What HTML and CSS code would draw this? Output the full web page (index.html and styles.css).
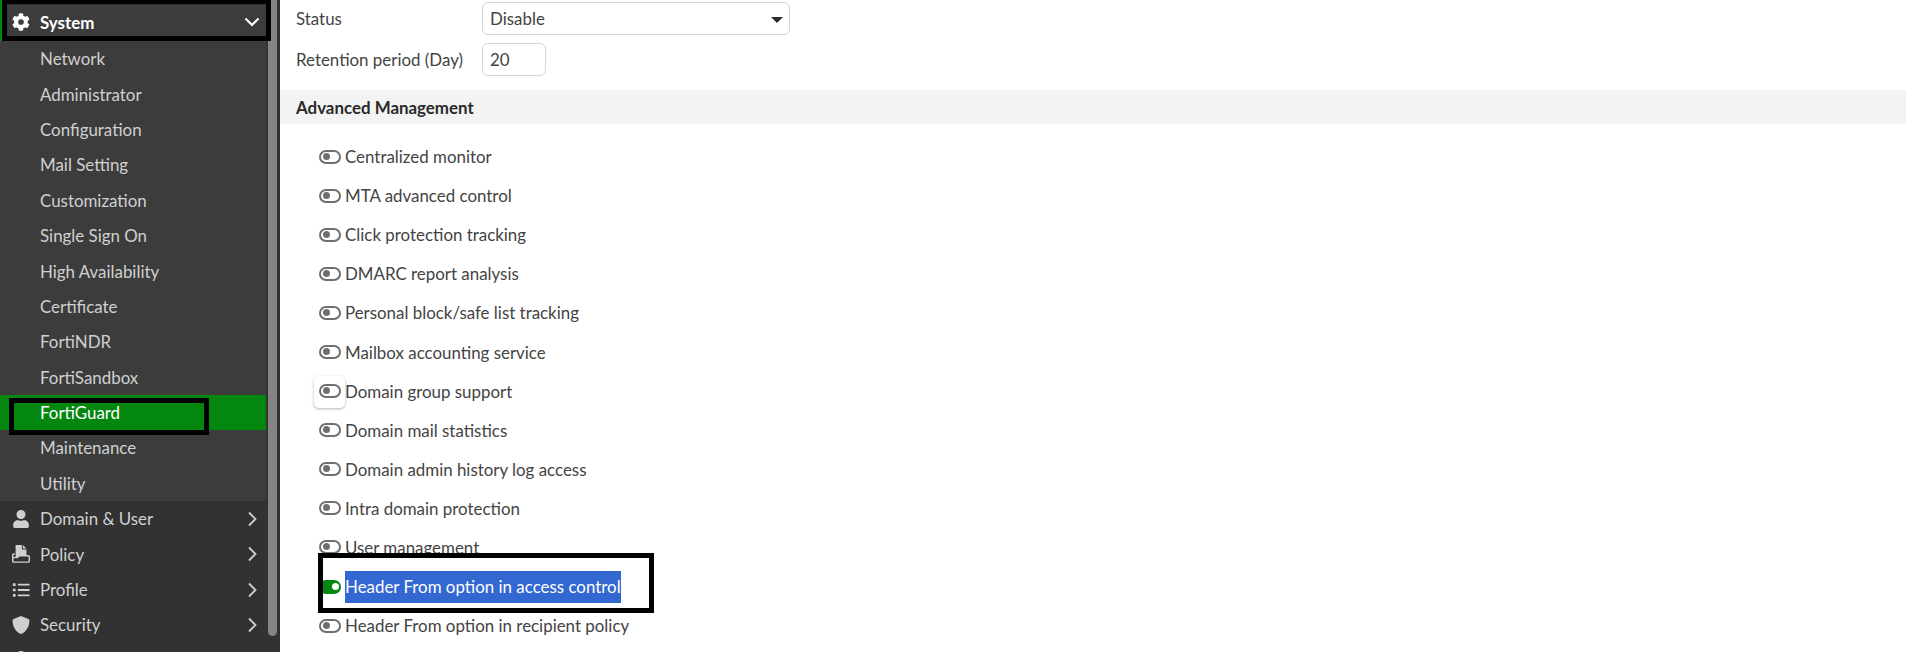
FILE: index.html
```html
<!DOCTYPE html>
<html lang="en">
<head>
  <meta charset="UTF-8">
  <title>FortiMail - FortiGuard</title>
  <link rel="stylesheet" href="styles.css">
</head>
<body>
  <div class="sidebar">
    <div class="menu">
      <div class="menu-item open">
        <svg class="icon" viewBox="0 0 512 512"><path fill-rule="evenodd" d="M487 316l-43-25a194 194 0 0 0 0-70l43-25c5-3 7-9 5-14-11-36-30-68-55-95-4-4-10-5-15-2l-43 25a190 190 0 0 0-61-35V25c0-6-4-10-9-11a201 201 0 0 0-111 0c-5 1-9 5-9 11v50a196 196 0 0 0-61 35L85 85c-5-3-11-2-15 2-25 27-44 59-55 95-2 5 0 11 5 14l43 25a194 194 0 0 0 0 70l-43 25c-5 3-7 9-5 14 11 36 30 68 55 95 4 4 10 5 15 2l43-25a190 190 0 0 0 61 35v50c0 6 4 10 9 11 38 9 75 8 111 0 5-1 9-5 9-11v-50a196 196 0 0 0 61-35l43 25c5 3 11 2 15-2 25-27 44-59 55-95 2-5 0-11-5-14zM256 336a80 80 0 1 1 0-160 80 80 0 0 1 0 160z"/></svg>
        <span>System</span>
        <svg class="chevron" viewBox="0 0 16 16"><path d="M1.500 4.500L8 11l6.500-6.500"/></svg>
      </div>
      <div class="submenu">
        <a class="sub-item">Network</a>
        <a class="sub-item">Administrator</a>
        <a class="sub-item">Configuration</a>
        <a class="sub-item">Mail Setting</a>
        <a class="sub-item">Customization</a>
        <a class="sub-item">Single Sign On</a>
        <a class="sub-item">High Availability</a>
        <a class="sub-item">Certificate</a>
        <a class="sub-item">FortiNDR</a>
        <a class="sub-item">FortiSandbox</a>
        <a class="sub-item active">FortiGuard</a>
        <a class="sub-item">Maintenance</a>
        <a class="sub-item">Utility</a>
      </div>
      <div class="menu-item">
        <svg class="icon" viewBox="0 0 448 512"><path d="M224 256a128 128 0 1 0 0-256 128 128 0 0 0 0 256zm90 32h-17a174 174 0 0 1-146 0h-17C60 288 0 348 0 422v42c0 27 21 48 48 48h352c27 0 48-21 48-48v-42c0-74-60-134-134-134z"/></svg>
        <span>Domain &amp; User</span>
        <svg class="chevron" viewBox="0 0 16 16"><path d="M5 1.500L11.500 8 5 14.500"/></svg>
      </div>
      <div class="menu-item">
        <svg class="icon" viewBox="0 0 20 20"><path d="M4 0h7v5h5v7H8l-2 2H4zM12 0l4 4h-4z"/><path class="icon-line" d="M3 10H1.800a1 1 0 0 0-1 1v7a1 1 0 0 0 1 1h16.400a1 1 0 0 0 1-1v-5a1 1 0 0 0-1-1H8l-2 2H1"/></svg>
        <span>Policy</span>
        <svg class="chevron" viewBox="0 0 16 16"><path d="M5 1.500L11.500 8 5 14.500"/></svg>
      </div>
      <div class="menu-item">
        <svg class="icon" viewBox="0 0 20 20"><path d="M1 2.500h3v3H1zM1 8.500h3v3H1zM1 14.500h3v3H1zM6.500 3h13v2h-13zM6.500 9h13v2h-13zM6.500 15h13v2h-13z"/></svg>
        <span>Profile</span>
        <svg class="chevron" viewBox="0 0 16 16"><path d="M5 1.500L11.500 8 5 14.500"/></svg>
      </div>
      <div class="menu-item">
        <svg class="icon" viewBox="0 0 512 512"><path d="M466 84L274 4a48 48 0 0 0-37 0L45 84c-18 7-29 25-29 44 0 198 114 335 221 380 12 5 25 5 37 0 85-36 221-159 221-380 0-19-12-37-29-44z"/></svg>
        <span>Security</span>
        <svg class="chevron" viewBox="0 0 16 16"><path d="M5 1.500L11.500 8 5 14.500"/></svg>
      </div>
      <div class="menu-item">
        <svg class="icon" viewBox="0 0 20 20"><path d="M4 9V6a6 6 0 0 1 12 0v3h1v10H3V9zm3 0h6V6a3 3 0 0 0-6 0z"/></svg>
      </div>
    </div>
    <div class="scrollbar"></div>
  </div>

  <div class="content">
    <div class="form-row first">
      <label>Status</label>
      <div class="select">Disable<span class="caret"></span></div>
    </div>
    <div class="form-row">
      <label>Retention period (Day)</label>
      <div class="input">20</div>
    </div>

    <div class="section-title">Advanced Management</div>

    <div class="options">
      <div class="option"><span class="toggle"></span>Centralized monitor</div>
      <div class="option"><span class="toggle"></span>MTA advanced control</div>
      <div class="option"><span class="toggle"></span>Click protection tracking</div>
      <div class="option"><span class="toggle"></span>DMARC report analysis</div>
      <div class="option"><span class="toggle"></span>Personal block/safe list tracking</div>
      <div class="option"><span class="toggle"></span>Mailbox accounting service</div>
      <div class="option focused"><span class="toggle"></span>Domain group support</div>
      <div class="option"><span class="toggle"></span>Domain mail statistics</div>
      <div class="option"><span class="toggle"></span>Domain admin history log access</div>
      <div class="option"><span class="toggle"></span>Intra domain protection</div>
      <div class="option"><span class="toggle"></span>User management</div>
      <div class="option marked"><span class="toggle on"></span><span class="selected">Header From option in access control</span></div>
      <div class="option"><span class="toggle"></span>Header From option in recipient policy</div>
    </div>
  </div>
</body>
</html>
```

FILE: styles.css
```css
*, *::before, *::after {
  margin: 0;
  padding: 0;
  box-sizing: border-box;
}
body {
  font-family: Lato, "Open Sans", sans-serif;
  font-size: 16.9px;
  color: #444;
  background: #fff;
  display: flex;
  height: 652px;
  overflow: hidden;
}
.sidebar {
  width: 280px;
  flex: none;
  display: flex;
  background: #323232;
  color: #d0d0d0;
  overflow: hidden;
}
.menu {
  width: 266px;
  margin-right: 2px;
  flex: none;
  padding-top: 5px;
}
.menu-item {
  height: 35.4px;
  flex: none;
  display: flex;
  align-items: center;
  padding: 0 6px 0 12px;
  position: relative;
}
.menu-item span {
  flex: 1;
  margin-left: 10px;
}
.menu-item.open {
  height: 36px;
  padding-bottom: 2px;
  background: #3c3c3c;
  color: #fff;
  font-weight: 700;
}
.menu-item.open::before {
  content: "";
  position: absolute;
  left: 0;
  top: -5px;
  bottom: 0;
  width: 2px;
  background: #04870f;
}
.menu-item.open::after {
  content: "";
  position: absolute;
  left: 2px;
  right: -5px;
  top: -6px;
  bottom: 0;
  border: 5px solid #000;
}
.icon {
  width: 18px;
  height: 18px;
  fill: #d0d0d0;
  flex: none;
}
.open .icon {
  fill: #fff;
}
.icon-line {
  fill: none;
  stroke: #d0d0d0;
  stroke-width: 1.6;
}
.chevron {
  width: 16px;
  height: 16px;
  fill: none;
  stroke: #d0d0d0;
  stroke-width: 1.8;
  flex: none;
}
.open .chevron {
  stroke: #fff;
  stroke-width: 2.2;
}
.submenu {
  background: #3c3c3c;
}
.sub-item {
  display: flex;
  align-items: center;
  height: 35.4px;
  padding-left: 40px;
}
.sub-item.active {
  background: #04870f;
  color: #fff;
  position: relative;
}
.sub-item.active::after {
  content: "";
  position: absolute;
  left: 9px;
  top: 3px;
  width: 200px;
  height: 37px;
  border: 5px solid #000;
}
.scrollbar {
  width: 9px;
  height: 636px;
  background: #858585;
  border-radius: 0 0 5px 5px;
}
.content {
  flex: 1;
  min-width: 0;
  padding-right: 2px;
}
.form-row {
  display: flex;
  align-items: center;
  padding-left: 16px;
  margin-bottom: 8px;
}
.form-row.first {
  padding-top: 2px;
}
.form-row label {
  width: 186px;
  flex: none;
}
.select, .input {
  height: 33px;
  border: 1px solid #d4d4d4;
  border-radius: 6px;
  padding-left: 7px;
  display: flex;
  align-items: center;
}
.select {
  width: 308px;
  position: relative;
}
.input {
  width: 64px;
}
.caret {
  position: absolute;
  right: 6px;
  top: 14px;
  border-left: 6px solid transparent;
  border-right: 6px solid transparent;
  border-top: 6px solid #2c2c2c;
}
.section-title {
  margin-top: 14px;
  height: 34px;
  line-height: 35px;
  padding-left: 16px;
  background: #f3f3f3;
  font-weight: 700;
  color: #2a2a2a;
}
.options {
  padding: 13px 0 0 39px;
}
.option {
  display: flex;
  align-items: center;
  height: 39.1px;
  position: relative;
}
.toggle {
  width: 22px;
  height: 14px;
  border: 2.500px solid #6f6f6f;
  border-radius: 7px;
  margin-right: 4px;
  flex: none;
  position: relative;
}
.toggle::after {
  content: "";
  position: absolute;
  left: 2px;
  top: 1px;
  width: 7px;
  height: 7px;
  border-radius: 50%;
  background: #6f6f6f;
}
.toggle.on {
  background: #04870f;
  border-color: #04870f;
}
.toggle.on::after {
  left: auto;
  right: 0.5px;
  background: #fff;
}
.focused::before {
  content: "";
  position: absolute;
  left: -5px;
  top: 4px;
  width: 31px;
  height: 32px;
  background: #fff;
  border-radius: 5px;
  box-shadow: 0 1px 3px rgba(0, 0, 0, 0.3);
}
.marked::after {
  content: "";
  position: absolute;
  left: -1px;
  top: -14px;
  width: 336px;
  height: 60px;
  border: 5px solid #000;
}
.selected {
  background: #3367d1;
  color: #fff;
  line-height: 32px;
}
```
